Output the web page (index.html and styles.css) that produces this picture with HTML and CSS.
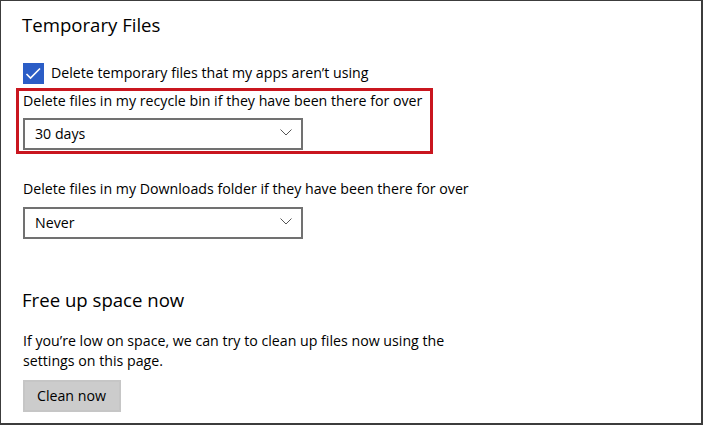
FILE: index.html
```html
<!DOCTYPE html>
<html lang="en">
<head>
<meta charset="utf-8">
<title>Storage settings</title>
<link rel="stylesheet" href="styles.css">
</head>
<body>
<div class="frame">
  <div class="content">
    <h2 class="section-title">Temporary Files</h2>

    <label class="check-row">
      <span class="checkbox">
        <svg width="21" height="21" viewBox="0 0 21 21"><polyline points="3.5,11 7.5,15 17,5.5" fill="none" stroke="#fff" stroke-width="1.6"/></svg>
      </span>
      <span class="check-label">Delete temporary files that my apps aren’t using</span>
    </label>

    <div class="highlight">
      <div class="field-label">Delete files in my recycle bin if they have been there for over</div>
      <div class="dropdown">
        <span>30 days</span>
        <svg class="chev" width="12" height="7" viewBox="0 0 12 7"><polyline points="0.5,0.5 6,6 11.5,0.5" fill="none" stroke="#555" stroke-width="1"/></svg>
      </div>
    </div>

    <div class="field-label downloads">Delete files in my Downloads folder if they have been there for over</div>
    <div class="dropdown second">
      <span>Never</span>
      <svg class="chev" width="12" height="7" viewBox="0 0 12 7"><polyline points="0.5,0.5 6,6 11.5,0.5" fill="none" stroke="#555" stroke-width="1"/></svg>
    </div>

    <h2 class="section-title free">Free up space now</h2>
    <p class="desc">If you’re low on space, we can try to clean up files now using the settings on this page.</p>
    <button class="btn">Clean now</button>
  </div>
</div>
</body>
</html>
```

FILE: styles.css
```css
html, body {
  margin: 0;
  padding: 0;
  background: #fff;
}

.frame {
  width: 703px;
  height: 425px;
  box-sizing: border-box;
  border: 1px solid #3c3c3c;
  border-right-width: 2px;
  border-bottom-width: 2px;
  background: #fff;
  overflow: hidden;
  font-family: "Open Sans", "Noto Sans", sans-serif;
  color: #000;
}

.content {
  padding-left: 22px;
  display: flex;
  flex-direction: column;
  align-items: flex-start;
}

.section-title {
  margin: 11px 0 0 -1px;
  font-size: 18.6px;
  line-height: 26px;
  font-weight: 400;
}

.section-title.free {
  margin-top: 48px;
}

.check-row {
  margin-top: 25px;
  display: flex;
  align-items: flex-start;
  gap: 7px;
}

.checkbox {
  width: 21px;
  height: 21px;
  background: #2b5dc6;
  display: block;
}

.checkbox svg {
  display: block;
}

.check-label {
  font-size: 14.2px;
  line-height: 19px;
}

.highlight {
  margin: 4px 0 0 -7px;
  width: 417px;
  box-sizing: border-box;
  border: 3px solid #c9161f;
  padding: 0 0 1px 4px;
}

.field-label {
  font-size: 14.2px;
  line-height: 19px;
}

.field-label.downloads {
  margin-top: 25px;
}

.dropdown {
  margin-top: 8px;
  width: 280px;
  height: 32px;
  box-sizing: border-box;
  border: 2px solid #717171;
  padding: 0 9px 0 10px;
  display: flex;
  align-items: center;
  justify-content: space-between;
  font-size: 14.2px;
  line-height: 28px;
}

.dropdown.second {
  margin-top: 9px;
}

.chev {
  display: block;
  margin-bottom: 3px;
}

.desc {
  margin: 18px 0 0;
  width: 440px;
  font-size: 14.2px;
  line-height: 20px;
}

.btn {
  margin-top: 9px;
  width: 98px;
  height: 32px;
  box-sizing: border-box;
  border: 2px solid #c6c6c6;
  background: #cccccc;
  padding: 0 0 0 12px;
  text-align: left;
  font-family: inherit;
  font-size: 14.2px;
  line-height: 28px;
  color: #000;
}
```
